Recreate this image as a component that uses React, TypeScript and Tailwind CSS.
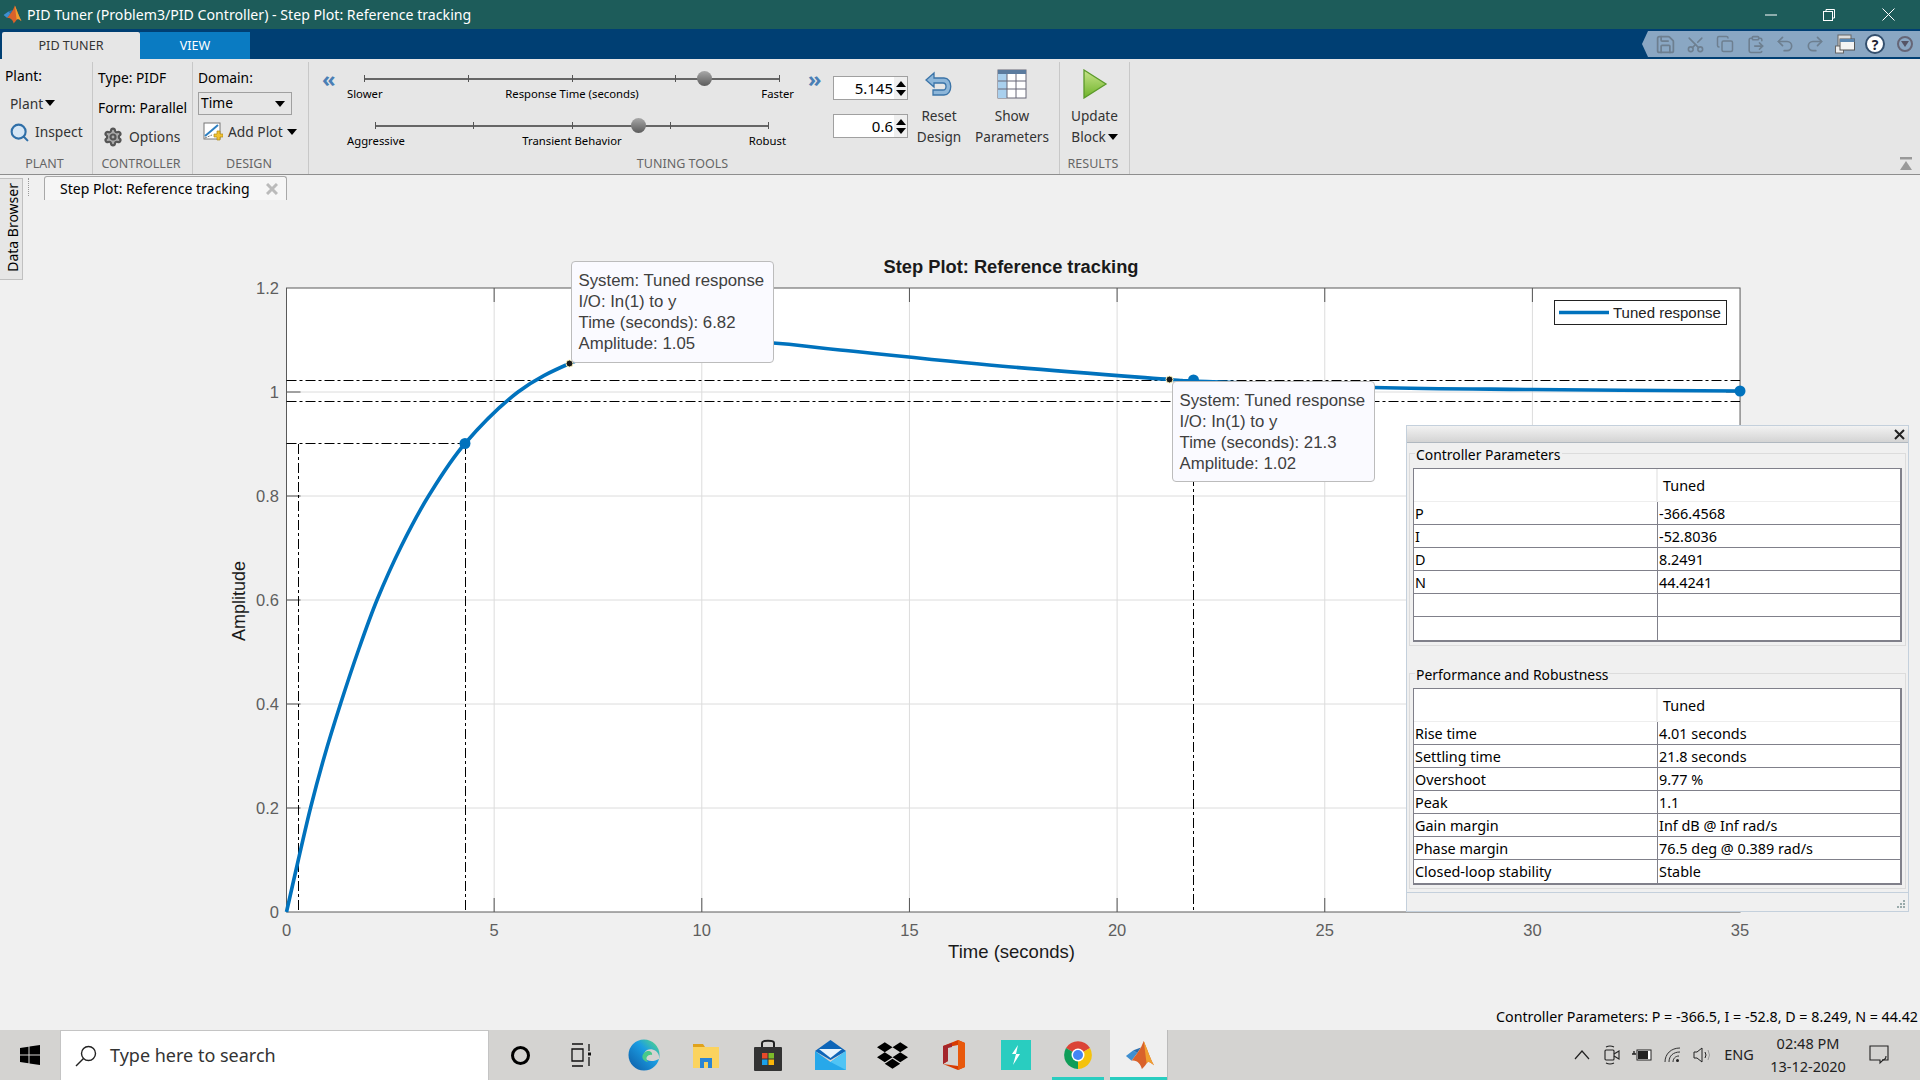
import { Copy, ClipboardPaste, Redo2, Save, Scissors, Search, Settings, Undo2 } from 'lucide-react';
import { FaDropbox } from 'react-icons/fa';

const UI = "[font-family:'Noto_Sans',sans-serif]";

const X0 = 286.5;
const XS = 41.53;
const Y0 = 912;
const YS = 520;
const px = (t: number) => X0 + t * XS;
const py = (a: number) => Y0 - a * YS;

// hand-read points of the response curve, in page pixels
const curve: [number, number][] = [
  [286.5, 912], [298.3, 860], [310.7, 807.3], [324.3, 756.7], [340.7, 703.3], [358.5, 650], [377.3, 599.3],
  [401, 546.7], [429, 495.3], [465, 443.5], [518, 392], [569.5, 363.5], [620, 347], [680, 339],
  [773, 343], [840, 350], [1000, 366], [1169.5, 379.5], [1193.5, 381], [1374, 387.5], [1532, 389.5], [1740, 391],
];

function smoothPath(p: [number, number][]) {
  let d = `M${p[0][0]} ${p[0][1]}`;
  for (let i = 0; i < p.length - 1; i++) {
    const a = p[Math.max(i - 1, 0)];
    const b = p[i];
    const c = p[i + 1];
    const e = p[Math.min(i + 2, p.length - 1)];
    d += ` C${b[0] + (c[0] - a[0]) / 6} ${b[1] + (c[1] - a[1]) / 6} ${c[0] - (e[0] - b[0]) / 6} ${c[1] - (e[1] - b[1]) / 6} ${c[0]} ${c[1]}`;
  }
  return d;
}

function Caret({ className = '' }: { className?: string }) {
  return <span className={`inline-block w-0 h-0 border-x-[5px] border-x-transparent border-t-[6px] border-t-black ${className}`} />;
}

function Section({ label, width, children }: { label: string; width: string; children: React.ReactNode }) {
  return (
    <div className={`${width} h-full flex flex-col border-r border-[#c8c8c8] shrink-0`}>
      <div className="flex-1 relative flex min-h-0">{children}</div>
      <div className="h-[19px] pr-[3px] text-center text-[12.5px] leading-[18px] text-[#666]">{label}</div>
    </div>
  );
}

function Slider({ inset, thumb, left, mid, right, pr = 0 }: { inset: string; thumb: string; left: string; mid: string; right: string; pr?: number }) {
  return (
    <div className="w-[450px]">
      <div className={`${inset} relative h-[9px] flex justify-between items-center`}>
        <div className="absolute left-0 right-0 top-[4px] h-[2px] bg-[#666]" />
        {[0, 1, 2, 3, 4].map((i) => (
          <div key={i} className="w-px h-[7px] bg-[#555] z-10" />
        ))}
        <div className={`absolute ${thumb} top-[-3px] w-[15px] h-[15px] rounded-full bg-gradient-to-b from-[#a8a8a8] to-[#5c5c5c] z-20`} />
      </div>
      <div className="grid grid-cols-[1fr_auto_1fr] text-[11.3px] leading-[17px] mt-[2px] text-black">
        <span>{left}</span>
        <span>{mid}</span>
        <span className="text-right" style={{ paddingRight: pr }}>{right}</span>
      </div>
    </div>
  );
}

function Spin({ value }: { value: string }) {
  return (
    <div className="w-[75px] h-[24px] bg-white border border-[#a0a0a0] flex items-center justify-end text-[15px] text-black">
      <span>{value}</span>
      <span className="w-[13px] ml-[1px] h-full bg-[#efefef] flex flex-col items-center justify-center gap-[3px]">
        <span className="w-0 h-0 border-x-[5px] border-x-transparent border-b-[6px] border-b-black" />
        <span className="w-0 h-0 border-x-[5px] border-x-transparent border-t-[6px] border-t-black" />
      </span>
    </div>
  );
}

function Ribbon() {
  return (
    <div className="h-[116px] bg-[#e6e6e6] border-b border-[#8e8e8e] flex pt-[3px] text-[13.8px] text-[#333] shrink-0">
      <Section label="PLANT" width="w-[93px]">
        <div className="pl-[5px] pt-[3px] w-full">
          <div className="h-[22px] leading-[22px] text-black">Plant:</div>
          <div className="h-[24px] leading-[24px] pl-[5px] mt-[5px] flex items-center gap-[2px]">Plant<Caret className="mt-[-2px]" /></div>
          <div className="flex items-center gap-[5px] pl-[4px] mt-[6px]">
            <Search size={21} strokeWidth={2.4} className="text-[#2f6fa8] fill-[#d5e6f5]" />
            <span>Inspect</span>
          </div>
        </div>
      </Section>
      <Section label="CONTROLLER" width="w-[100px]">
        <div className="pl-[5px] pt-[5px] w-full">
          <div className="h-[22px] leading-[22px] text-black">Type: PIDF</div>
          <div className="h-[22px] leading-[22px] mt-[8px] text-black">Form: Parallel</div>
          <div className="flex items-center gap-[6px] pl-[5px] mt-[8px]">
            <Settings size={20} strokeWidth={2.6} className="text-[#555] fill-[#aaa]" />
            <span>Options</span>
          </div>
        </div>
      </Section>
      <Section label="DESIGN" width="w-[116px]">
        <div className="pl-[5px] pt-[6px] w-full">
          <div className="h-[20px] leading-[20px] text-black">Domain:</div>
          <div className="w-[94px] h-[23px] mt-[4px] border border-[#a0a0a0] flex items-center justify-between pl-[2px] pr-[6px] text-black">
            Time<Caret />
          </div>
          <div className="flex items-center gap-[5px] pl-[5px] mt-[7px]">
            <svg width="20" height="20" viewBox="0 0 20 20">
              <rect x="1" y="1" width="16" height="16" fill="#fff" stroke="#777" />
              <path d="M2 14 L8 9 L15 3" stroke="#2d7fc1" strokeWidth="2" fill="none" />
              <path d="M2 16 L9 13" stroke="#777" strokeDasharray="2 1" fill="none" />
              <path d="M14 9h3v3h3v3h-3v3h-3v-3h-3v-3h3z" fill="#f2c230" stroke="#b08a18" strokeWidth="0.7" />
            </svg>
            <span>Add Plot</span>
            <Caret className="ml-[-1px]" />
          </div>
        </div>
      </Section>
      <Section label="TUNING TOOLS" width="w-[751px]">
        <div className="flex w-full pt-[12px]">
          <div className="w-[38px] pl-[13px]">
            <span className="block text-[#4a7fb5] text-[22px] leading-[14px] mt-[-3px] font-bold tracking-[-1px]">«</span>
          </div>
          <div className="w-[450px] flex flex-col gap-[19px]">
            <Slider inset="mx-[17px]" thumb="left-[333px]" left="Slower" mid="Response Time (seconds)" right="Faster" pr={3} />
            <Slider inset="ml-[28px] mr-[28px]" thumb="left-[256px]" left="Aggressive" mid="Transient Behavior" right="Robust" pr={11} />
          </div>
          <div className="w-[36px] pl-[11px]">
            <span className="block text-[#4a7fb5] text-[22px] leading-[14px] mt-[-3px] font-bold tracking-[-1px]">»</span>
          </div>
          <div className="w-[76px] flex flex-col gap-[14px] pt-[2px]">
            <Spin value="5.145" />
            <Spin value="0.6" />
          </div>
          <div className="w-[60px] flex flex-col items-center mt-[-5px] text-[13.6px]">
            <svg width="30" height="30" viewBox="0 0 30 30">
              <path d="M10 4 L2 11 L10 18 V14 H19 C23 14 23 21 19 21 H9 V26 H20 C29 26 29 9 20 9 H10 Z" fill="#8db6d9" stroke="#3b74a8" strokeWidth="1.3" />
            </svg>
            <div className="text-center leading-[21px] mt-[6px] whitespace-nowrap">Reset<br />Design</div>
          </div>
          <div className="w-[86px] flex flex-col items-center mt-[-5px] text-[13.6px]">
            <svg width="30" height="30" viewBox="0 0 30 30">
              <rect x="1" y="1" width="28" height="28" fill="#fff" stroke="#667" />
              <rect x="1" y="1" width="28" height="4" fill="#5b7b9e" />
              <rect x="1" y="5" width="9" height="24" fill="#a9d0ee" />
              <path d="M1 12H29M1 20H29M10 5V29M19 5V29" stroke="#667" />
            </svg>
            <div className="text-center leading-[21px] mt-[6px] whitespace-nowrap">Show<br />Parameters</div>
          </div>
        </div>
      </Section>
      <Section label="RESULTS" width="w-[70px]">
        <div className="w-full flex flex-col items-center pt-[7px] text-[13.6px]">
          <svg width="26" height="30" viewBox="0 0 26 30">
            <defs>
              <linearGradient id="go" x1="0" y1="0" x2="0" y2="1">
                <stop offset="0" stopColor="#c8e48a" />
                <stop offset="1" stopColor="#6eb32a" />
              </linearGradient>
            </defs>
            <path d="M2 1 L24 15 L2 29 Z" fill="url(#go)" stroke="#5b9a2a" strokeWidth="1.3" />
          </svg>
          <div className="text-center leading-[21px] mt-[6px] whitespace-nowrap">
            Update<br />Block<Caret className="ml-[2px] mb-[2px]" />
          </div>
        </div>
      </Section>
      <div className="flex-1 relative">
        <svg width="14" height="14" viewBox="0 0 14 14" className="absolute right-[7px] bottom-[3px]">
          <rect x="1" y="0" width="12" height="2.5" fill="#999" />
          <path d="M7 4 L13 13 H1 Z" fill="#999" />
        </svg>
      </div>
    </div>
  );
}

function Tooltip({ pos, lines }: { pos: string; lines: string[] }) {
  return (
    <div className={`absolute ${pos} bg-[#fafaff] border border-[#bcbcbc] rounded-[4px] pl-[7px] pt-[8px] text-[16.8px] leading-[21px] text-[#404040] [font-family:'Liberation_Sans',sans-serif] z-10`}>
      {lines.map((l) => (
        <div key={l} className="whitespace-nowrap">{l}</div>
      ))}
    </div>
  );
}

function ParamTable({ rows }: { rows: [string, string][] }) {
  return (
    <div className="border-t border-l border-r-2 border-b-2 border-[#80808a] bg-white text-[14.4px] text-black">
      <div className="grid grid-cols-[244px_1fr] h-[33px] border-b border-[#eee]">
        <div className="border-r-2 border-[#eee]" />
        <div className="pl-[5px] pt-[6px] leading-[22px]">Tuned</div>
      </div>
      {rows.map(([k, v], i) => (
        <div key={i} className={`grid grid-cols-[244px_1fr] h-[23px] leading-[23px] ${i < rows.length - 1 ? 'border-b border-[#80808a]' : ''}`}>
          <div className="border-r border-[#80808a] pl-[1px] whitespace-nowrap">{k}</div>
          <div className="pl-[1px] whitespace-nowrap">{v}</div>
        </div>
      ))}
    </div>
  );
}

function Group({ title, rows }: { title: string; rows: [string, string][] }) {
  return (
    <fieldset className="border border-[#dcdcdc] px-[3px] pb-[3px] mx-[2px]">
      <legend className="ml-[2px] px-[1px] text-[13.9px] leading-[20px] text-black">
        <span className="relative top-[2px]">{title}</span>
      </legend>
      <div className="mt-[5px]">
        <ParamTable rows={rows} />
      </div>
    </fieldset>
  );
}

function ParamPanel() {
  return (
    <div className={`absolute left-[1382px] top-[225px] w-[503px] h-[487px] bg-[#f0f0f0] border border-[#c4d0dc] flex flex-col z-20 ${UI}`}>
      <div className="h-[17px] bg-gradient-to-b from-[#f2f2f2] to-[#d4d4d4] border-b border-[#b0b8c0] flex justify-end items-center pr-[3px]">
        <svg width="11" height="11" viewBox="0 0 11 11"><path d="M1 1 L10 10 M10 1 L1 10" stroke="#222" strokeWidth="2" /></svg>
      </div>
      <Group
        title="Controller Parameters"
        rows={[['P', '-366.4568'], ['I', '-52.8036'], ['D', '8.2491'], ['N', '44.4241'], ['', ''], ['', '']]}
      />
      <div className="h-[17px]" />
      <Group
        title="Performance and Robustness"
        rows={[
          ['Rise time', '4.01 seconds'],
          ['Settling time', '21.8 seconds'],
          ['Overshoot', '9.77 %'],
          ['Peak', '1.1'],
          ['Gain margin', 'Inf dB @ Inf rad/s'],
          ['Phase margin', '76.5 deg @ 0.389 rad/s'],
          ['Closed-loop stability', 'Stable'],
        ]}
      />
      <div className="flex-1 mt-[3px] border-t border-[#c4d0dc] relative">
        <svg width="10" height="10" viewBox="0 0 10 10" className="absolute right-[2px] bottom-[2px]" fill="#9aa">
          <rect x="7" y="1" width="2" height="2" /><rect x="4" y="4" width="2" height="2" /><rect x="7" y="4" width="2" height="2" />
          <rect x="1" y="7" width="2" height="2" /><rect x="4" y="7" width="2" height="2" /><rect x="7" y="7" width="2" height="2" />
        </svg>
      </div>
    </div>
  );
}

function Chart() {
  const xt = [0, 5, 10, 15, 20, 25, 30, 35];
  const yt = [0, 0.2, 0.4, 0.6, 0.8, 1, 1.2];
  const dash = '10 3 3 3';
  return (
    <svg width="1896" height="804" viewBox="24 200 1896 804" className="block [font-family:'Liberation_Sans',sans-serif]">
      <rect x={X0} y={py(1.2)} width={px(35) - X0} height={1.2 * YS} fill="#fff" />
      {xt.slice(1, -1).map((t) => (
        <g key={t}>
          <line x1={px(t)} x2={px(t)} y1={py(1.2)} y2={Y0} stroke="#dcdcdc" />
          <line x1={px(t)} x2={px(t)} y1={py(1.2)} y2={py(1.2) + 14} stroke="#555" />
          <line x1={px(t)} x2={px(t)} y1={Y0} y2={Y0 - 14} stroke="#555" />
        </g>
      ))}
      {yt.slice(1, -1).map((a) => (
        <g key={a}>
          <line x1={X0} x2={px(35)} y1={py(a)} y2={py(a)} stroke="#dcdcdc" />
          <line x1={X0} x2={X0 + 14} y1={py(a)} y2={py(a)} stroke="#555" />
          <line x1={px(35)} x2={px(35) - 14} y1={py(a)} y2={py(a)} stroke="#555" />
        </g>
      ))}
      <rect x={X0} y={py(1.2)} width={px(35) - X0} height={1.2 * YS} fill="none" stroke="#5a5a5a" />

      <g stroke="#000" strokeDasharray={dash} fill="none" strokeWidth="1">
        <line x1={X0} x2={px(35)} y1={380.5} y2={380.5} />
        <line x1={X0} x2={px(35)} y1={401.5} y2={401.5} />
        <line x1={X0} x2={465} y1={443.5} y2={443.5} />
        <line x1={298.5} x2={298.5} y1={444} y2={Y0} />
        <line x1={465.5} x2={465.5} y1={444} y2={Y0} />
        <line x1={1193.5} x2={1193.5} y1={381} y2={Y0} />
      </g>

      <path d={smoothPath(curve)} fill="none" stroke="#0072bd" strokeWidth="3.6" />
      <circle cx={465} cy={443.5} r={5.5} fill="#0072bd" />
      <circle cx={1193.5} cy={380} r={5.5} fill="#0072bd" />
      <circle cx={1740} cy={391} r={5.5} fill="#0072bd" />
      <circle cx={569.5} cy={363.5} r={3.5} fill="#1a1a1a" stroke="#fff6c0" />
      <circle cx={1169.5} cy={379.5} r={3.5} fill="#1a1a1a" stroke="#fff6c0" />

      <g fontSize="16.5" fill="#5e5e5e">
        {xt.map((t) => (
          <text key={t} x={px(t)} y={936} textAnchor="middle">{t}</text>
        ))}
        {yt.map((a) => (
          <text key={a} x={279} y={py(a) + 6} textAnchor="end">{a}</text>
        ))}
      </g>
      <text x={1011} y={272.5} fontSize="18.3" fontWeight="700" textAnchor="middle" fill="#1a1a1a">Step Plot: Reference tracking</text>
      <text x={1011.5} y={958} fontSize="18.5" textAnchor="middle" fill="#1a1a1a">Time (seconds)</text>
      <text transform="translate(245 601) rotate(-90)" fontSize="18" textAnchor="middle" fill="#1a1a1a">Amplitude</text>

      <rect x={1554.5} y={300.5} width={172} height={24} fill="#fff" stroke="#222" />
      <line x1={1559} x2={1609} y1={312.5} y2={312.5} stroke="#0072bd" strokeWidth="3.6" />
      <text x={1613} y={318} fontSize="15" fill="#222">Tuned response</text>
    </svg>
  );
}

function QuickIcon({ children, w = 'w-[30px]' }: { children: React.ReactNode; w?: string }) {
  return <div className={`${w} h-full flex items-center justify-center shrink-0`}>{children}</div>;
}

function Windows() {
  return (
    <svg width="20" height="20" viewBox="0 0 20 20" fill="#000">
      <path d="M0 3 L8.5 1.8 V9.4 H0 Z M9.5 1.6 L20 0 V9.4 H9.5 Z M0 10.5 H8.5 V18.2 L0 17 Z M9.5 10.5 H20 V20 L9.5 18.4 Z" />
    </svg>
  );
}

function MatlabLogo({ size }: { size: number }) {
  return (
    <svg width={size} height={size} viewBox="0 0 32 32">
      <path d="M1 17 L9 11 L13 14 L7 22 Z" fill="#3f8fd0" />
      <path d="M9 11 L13 14 L17 8 Z" fill="#2a6fb0" />
      <path d="M7 22 L13 14 L17 8 L20 1 C23 8 27 20 31 27 C27 24 25 22 23 25 C21 28 19 30 18 31 C17 26 13 21 7 22 Z" fill="#d9622b" />
      <path d="M20 1 C23 8 27 20 31 27 C27 24 25 22 23 25 C22 17 21 9 20 1 Z" fill="#f0a030" />
    </svg>
  );
}

function TaskIcons() {
  return (
    <div className="flex items-center h-full">
      <div className="w-[62px] flex justify-center">
        <span className="w-[19px] h-[19px] rounded-full border-[3px] border-black" />
      </div>
      <div className="w-[62px] flex justify-center">
        <svg width="22" height="24" viewBox="0 0 22 24" fill="none" stroke="#111" strokeWidth="1.3">
          <path d="M1 1H12M1 23H12M1 6H12V18H1Z M18 1V8M18 14V23" />
          <rect x="17" y="9.5" width="3" height="3" fill="#111" stroke="none" />
        </svg>
      </div>
      <div className="w-[62px] flex justify-center">
        <svg width="32" height="32" viewBox="0 0 32 32">
          <defs>
            <linearGradient id="edge" x1="0" y1="1" x2="1" y2="0">
              <stop offset="0" stopColor="#0c59a4" />
              <stop offset="0.6" stopColor="#1b9de2" />
              <stop offset="1" stopColor="#5ee07a" />
            </linearGradient>
          </defs>
          <circle cx="16" cy="16" r="15.5" fill="url(#edge)" />
          <path d="M31 17 C30 12 24 9 19 11 C15 13 15 19 19 21 C23 23 27 22 31 20 Z" fill="#d4d3d1" />
          <path d="M16 14 C20 10 25 13 24 16 C21 15 16 18 20 23 C14 22 13 17 16 14 Z" fill="#48c98a" />
        </svg>
      </div>
      <div className="w-[62px] flex justify-center">
        <svg width="28" height="28" viewBox="0 0 28 28">
          <path d="M1 3 H11 L13 6 H1 Z" fill="#e0a21c" />
          <rect x="1" y="6" width="26" height="21" fill="#fbd35f" />
          <path d="M8 27 V17 H20 V27 H16 V21 H12 V27 Z" fill="#2b85d4" />
        </svg>
      </div>
      <div className="w-[62px] flex justify-center">
        <svg width="28" height="32" viewBox="0 0 28 32">
          <path d="M8 8 V4 C8 1 20 1 20 4 V8" stroke="#222" strokeWidth="2" fill="none" />
          <rect x="0" y="8" width="28" height="24" rx="1" fill="#333" />
          <rect x="8" y="14" width="5.5" height="5.5" fill="#e8492a" />
          <rect x="14.5" y="14" width="5.5" height="5.5" fill="#7cbb2a" />
          <rect x="8" y="20.5" width="5.5" height="5.5" fill="#1aa0e8" />
          <rect x="14.5" y="20.5" width="5.5" height="5.5" fill="#fab60a" />
        </svg>
      </div>
      <div className="w-[62px] flex justify-center">
        <svg width="31" height="30" viewBox="0 0 31 30">
          <path d="M0 11 L15.5 0 L31 11 L15.5 20 Z" fill="#0d65b8" />
          <path d="M4 9 H27 L15.5 18 Z" fill="#e8f4fc" />
          <path d="M0 11 L15.5 22 L31 11 V30 H0 Z" fill="#27a8ea" />
          <path d="M15.5 22 L31 11 V30 Z" fill="#50c4f5" />
        </svg>
      </div>
      <div className="w-[62px] flex justify-center">
        <FaDropbox size={31} color="#000" />
      </div>
      <div className="w-[62px] flex justify-center">
        <svg width="24" height="30" viewBox="0 0 24 30">
          <path d="M1 6 L16 0 L23 3 V27 L16 30 L1 24 L16 26 V5 L6 7 V21 L1 24 Z" fill="#d83b01" />
          <path d="M16 0 L23 3 V27 L16 30 Z" fill="#e8590c" />
          <path d="M1 6 L10 3 V7 L6 8 V21 L1 24 Z" fill="#a4262c" />
        </svg>
      </div>
      <div className="w-[62px] flex justify-center">
        <div className="w-[30px] h-[30px] bg-[#29cdc0] flex items-center justify-center">
          <svg width="12" height="20" viewBox="0 0 12 20"><path d="M8 0 L2 9 H6 L3 20 L10 9 H6 Z" fill="#fff" /></svg>
        </div>
      </div>
      <div className="w-[62px] flex justify-center relative h-full items-center">
        <svg width="28" height="28" viewBox="0 0 28 28">
          <path d="M14 14 L2 7 A14 14 0 0 1 26 7 Z" fill="#db4437" />
          <path d="M14 14 L26 7 A14 14 0 0 1 14 28 Z" fill="#f4c20d" />
          <path d="M14 14 L14 28 A14 14 0 0 1 2 7 Z" fill="#0f9d58" />
          <circle cx="14" cy="14" r="6.5" fill="#fff" />
          <circle cx="14" cy="14" r="5" fill="#4285f4" />
        </svg>
        <div className="absolute bottom-0 left-[5px] right-[5px] h-[3px] bg-[#29cdc0]" />
      </div>
      <div className="w-[58px] ml-[1px] flex justify-center relative h-full items-center bg-[#efefef] border-r border-[#bbb] pl-[2px]">
        <MatlabLogo size={30} />
        <div className="absolute bottom-0 left-0 right-0 h-[3px] bg-[#29cdc0]" />
      </div>
    </div>
  );
}

function Tray() {
  return (
    <div className="flex items-center h-full ml-auto text-[#222]">
      <div className="w-[30px] flex justify-center">
        <svg width="16" height="10" viewBox="0 0 16 10" fill="none" stroke="#222" strokeWidth="1.2"><path d="M1 9 L8 1 L15 9" /></svg>
      </div>
      <div className="w-[30px] flex justify-center">
        <svg width="16" height="20" viewBox="0 0 16 20" fill="none" stroke="#222" strokeWidth="1.1"><rect x="1" y="5" width="9" height="10" rx="1" /><path d="M10 9 L15 6 V14 L10 11 M2 2 Q6 0 10 2 M2 18 Q6 20 10 18" /></svg>
      </div>
      <div className="w-[30px] flex justify-center">
        <svg width="20" height="12" viewBox="0 0 20 12"><rect x="5" y="1" width="14" height="10" fill="#fff" stroke="#222" /><rect x="6" y="2" width="10" height="8" fill="#222" /><path d="M0 5H4M2 2V5" stroke="#222" strokeWidth="1.4" /></svg>
      </div>
      <div className="w-[31px] flex justify-center">
        <svg width="17" height="16" viewBox="0 0 17 16" fill="none" stroke="#333"><path d="M1 15 C1 7 7 1 16 1 M5 15 C5 9 9 5 16 5 M9 15 C9 12 11 9 15 9" /><circle cx="13.5" cy="13.5" r="1.5" fill="#222" stroke="none" /></svg>
      </div>
      <div className="w-[29px] flex justify-center">
        <svg width="20" height="16" viewBox="0 0 20 16" fill="none" stroke="#222"><path d="M1 5H4L9 1V15L4 11H1Z" /><path d="M12 5 Q14 8 12 11" /><path d="M15 3 Q18 8 15 13" stroke="#999" /></svg>
      </div>
      <div className="w-[44px] text-center text-[14.5px]">ENG</div>
      <div className="w-[94px] text-center text-[14.5px] leading-[23px]">
        <div>02:48 PM</div>
        <div>13-12-2020</div>
      </div>
      <div className="w-[48px] flex justify-center">
        <svg width="20" height="20" viewBox="0 0 20 20" fill="none" stroke="#222" strokeWidth="1.1"><path d="M1 1H19V15H14L11 18V15H1Z" /><path d="M13 15 Q17 15 17 11" /></svg>
      </div>
      <div className="w-[17px]" />
    </div>
  );
}

export default function App() {
  return (
    <div className={`w-[1920px] h-[1080px] flex flex-col overflow-hidden bg-[#f0f0f0] ${UI}`}>
      <div className="h-[29px] bg-[#1d5c5a] flex items-center text-white text-[14.15px] shrink-0">
        <div className="w-[27px] pl-[3px] flex items-center"><MatlabLogo size={19} /></div>
        <span className="whitespace-nowrap">PID Tuner (Problem3/PID Controller) - Step Plot: Reference tracking</span>
        <div className="ml-auto flex items-center h-full">
          <div className="w-[58px] flex justify-center"><svg width="12" height="12" viewBox="0 0 12 12"><path d="M0 6H12" stroke="#fff" /></svg></div>
          <div className="w-[58px] flex justify-center"><svg width="12" height="12" viewBox="0 0 12 12" fill="none" stroke="#fff"><rect x="0.5" y="2.5" width="9" height="9" /><path d="M3 2.5V0.5H11.5V9H9.5" /></svg></div>
          <div className="w-[62px] flex justify-center pr-[2px]"><svg width="13" height="13" viewBox="0 0 13 13" stroke="#fff"><path d="M0.5 0.5L12.5 12.5M12.5 0.5L0.5 12.5" /></svg></div>
        </div>
      </div>

      <div className="h-[30px] bg-[#003f73] flex items-end pl-[2px] shrink-0 text-[12.6px]">
        <div className="w-[138px] h-[27px] pt-[1px] bg-[#e6e6e6] rounded-t-[2px] flex items-center justify-center text-[#333]">PID TUNER</div>
        <div className="w-[110px] h-[27px] pt-[1px] bg-[#0a7bc2] flex items-center justify-center text-white">VIEW</div>
        <div className="ml-auto h-[26px] mb-[2px] w-[278px] bg-[#8aa7c3] flex items-center [clip-path:polygon(6px_0,100%_0,100%_100%,6px_100%,0_50%)] pl-[8px]">
          <QuickIcon><Save size={21} className="text-[#6d7f90]" /></QuickIcon>
          <QuickIcon><Scissors size={19} className="text-[#6d7f90] -rotate-90" /></QuickIcon>
          <QuickIcon><Copy size={18} className="text-[#6d7f90]" /></QuickIcon>
          <QuickIcon><ClipboardPaste size={19} className="text-[#6d7f90]" /></QuickIcon>
          <QuickIcon><Undo2 size={20} className="text-[#6d7f90]" /></QuickIcon>
          <QuickIcon><Redo2 size={20} className="text-[#6d7f90]" /></QuickIcon>
          <QuickIcon>
            <svg width="20" height="20" viewBox="0 0 20 20"><rect x="3" y="1" width="13" height="13" fill="#ddd" stroke="#666" /><rect x="0.5" y="12" width="8" height="7" fill="#eee" stroke="#666" /><rect x="5" y="5" width="14.5" height="11" fill="#f4f4f4" stroke="#555" /><rect x="5" y="5" width="14.5" height="3" fill="#5a86b0" /></svg>
          </QuickIcon>
          <QuickIcon>
            <span className="w-[20px] h-[20px] rounded-full bg-white border-2 border-[#34506e] flex items-center justify-center text-[14px] font-bold text-[#223]">?</span>
          </QuickIcon>
          <QuickIcon>
            <span className="w-[16px] h-[16px] rounded-full border-2 border-[#667] flex items-center justify-center">
              <span className="w-0 h-0 border-x-[4px] border-x-transparent border-t-[6px] border-t-[#556]" />
            </span>
          </QuickIcon>
        </div>
      </div>

      <Ribbon />

      <div className="flex-1 flex min-h-0">
        <div className="w-[24px] shrink-0 pt-[3px]">
          <div className="w-[23px] h-[102px] bg-[#e6e6e6] border border-l-0 border-[#c0c0c0] flex items-center justify-center pl-[3px] pb-[4px]">
            <span className="[writing-mode:vertical-rl] rotate-180 text-[14px] text-black whitespace-nowrap">Data Browser</span>
          </div>
        </div>
        <div className="flex-1 flex flex-col min-w-0">
          <div className="h-[25px] flex items-end shrink-0">
            <div className="w-[2px] h-[18px] ml-[4px] mb-[4px] border-l border-dotted border-[#999]" />
            <div className="w-[243px] h-[24px] ml-[14px] bg-[#f6f6f6] border border-b-0 border-[#a8a8a8] rounded-t-[3px] flex items-center justify-between pl-[15px] pr-[8px] text-[14.05px] text-black">
              <span className="whitespace-nowrap">Step Plot: Reference tracking</span>
              <svg width="12" height="12" viewBox="0 0 12 12" stroke="#bbb" strokeWidth="3"><path d="M1 1L11 11M11 1L1 11" /></svg>
            </div>
          </div>
          <div className="relative h-[804px] shrink-0">
            <Chart />
            <Tooltip pos="left-[546.5px] top-[60.5px] w-[203px] h-[102px]" lines={['System: Tuned response', 'I/O: In(1) to y', 'Time (seconds): 6.82', 'Amplitude: 1.05']} />
            <Tooltip pos="left-[1147.5px] top-[181px] w-[203px] h-[101px]" lines={['System: Tuned response', 'I/O: In(1) to y', 'Time (seconds): 21.3', 'Amplitude: 1.02']} />
            <ParamPanel />
          </div>
          <div className="flex-1 flex items-center justify-end pr-[2px] text-[14.25px] text-black">
            Controller Parameters: P = -366.5, I = -52.8, D = 8.249, N = 44.42
          </div>
        </div>
      </div>

      <div className="h-[50px] bg-[#d4d3d1] flex items-center shrink-0">
        <div className="w-[60px] flex justify-center"><Windows /></div>
        <div className="w-[429px] h-full bg-white border-t border-x border-[#c4c4c4] flex items-center pl-[14px] gap-[13px] text-[18px] text-[#333]">
          <svg width="22" height="22" viewBox="0 0 22 22" fill="none" stroke="#222" strokeWidth="1.4"><circle cx="13.5" cy="8.5" r="7" /><path d="M8.5 13.5L1 21" /></svg>
          <span>Type here to search</span>
        </div>
        <TaskIcons />
        <Tray />
      </div>
    </div>
  );
}
